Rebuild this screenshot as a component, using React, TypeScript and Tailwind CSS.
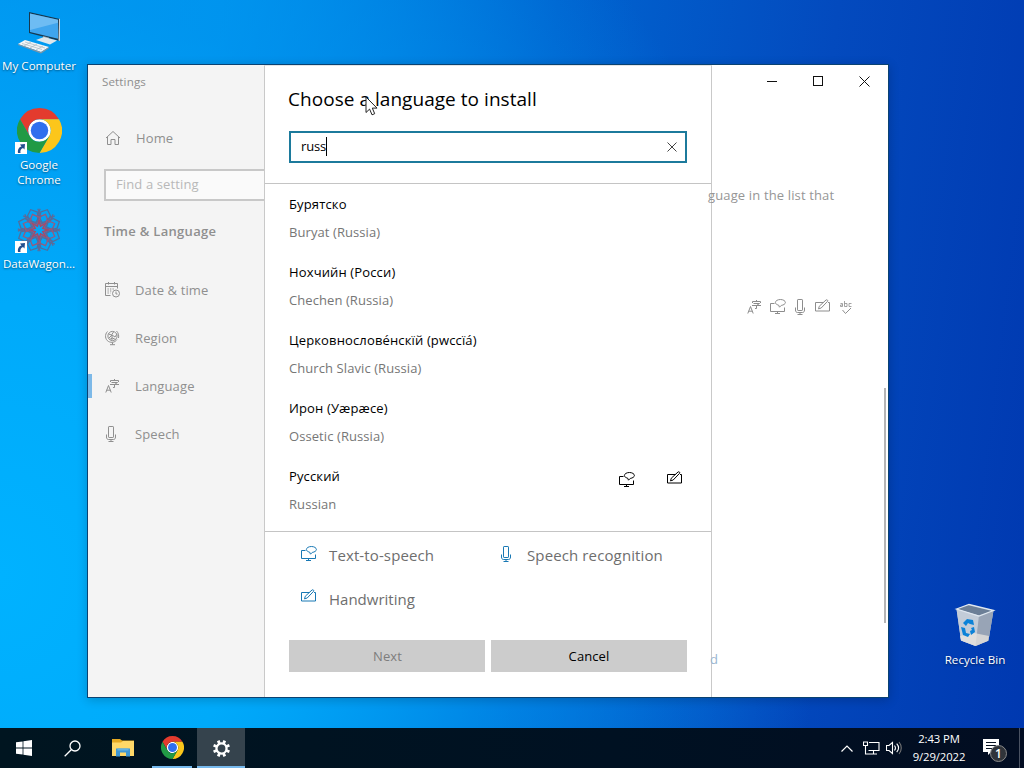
import React from 'react';

type IconProps = { className?: string };

const TtsIcon = ({ className = '' }: IconProps) => (
  <svg viewBox="0 0 16 16" className={`h-4 w-4 shrink-0 ${className}`} fill="none" stroke="currentColor" strokeWidth="1">
    <path d="M4.500 4.500H.5v8h14V8.500M7.500 12.500v2M5 14.500h5" />
    <path d="M8.600 6.100C6.600 5.700 5.400 4.700 5.400 3.500c0-1.600 2.200-3 5-3s5 1.400 5 3c0 1.400-1.800 2.600-4.100 2.900L9.500 8.200z" />
  </svg>
);

const PenIcon = ({ className = '' }: IconProps) => (
  <svg viewBox="0 0 16 16" className={`h-4 w-4 shrink-0 ${className}`} fill="none" stroke="currentColor" strokeWidth="1">
    <path d="M8.500 4.500H.5v8.500h14V4.500h-1.500" />
    <path d="M3.500 10.900l.8-2.700L11 2c1-.8 2.300.4 1.500 1.400L6.200 10z" />
  </svg>
);

const MicIcon = ({ className = '' }: IconProps) => (
  <svg viewBox="0 0 16 18" className={`h-[18px] w-4 shrink-0 ${className}`} fill="none" stroke="currentColor" strokeWidth="1">
    <rect x="5.500" y="1.500" width="5" height="11" rx=".6" />
    <path d="M3.500 9.500v2.500c0 1.500.7 2.500 2 2.500h5c1.300 0 2-1 2-2.500V9.500M8 14.500v2M5.500 16.500h5" />
  </svg>
);

const LanguageIcon = ({ className = '' }: IconProps) => (
  <svg viewBox="0 0 16 16" className={`h-4 w-4 shrink-0 ${className}`} fill="none" stroke="currentColor" strokeWidth="1">
    <path d="M1.800 14.500L4.500 7.500l2.700 7M2.700 12.200h3.700" />
    <path d="M6.500 4V2.500h8V4M10.500 1v1.500M7.500 4.500h6L10.500 6.500V9.500H9M6 6.500h9" />
  </svg>
);

const SpellIcon = ({ className = '' }: IconProps) => (
  <svg viewBox="0 0 16 16" className={`h-4 w-4 shrink-0 ${className}`} fill="none" stroke="currentColor" strokeWidth=".8">
    <path d="M2.500 3.500h2v3h-2V5h2M6.500 1v5.500h2.500v-3H6.500M13.500 3.500H11v3h2.500" />
    <path d="M4.500 10l3 3.500L13 8" strokeWidth="1" />
  </svg>
);

const HomeIcon = () => (
  <svg viewBox="0 0 16 16" className="h-4 w-4" fill="none" stroke="currentColor" strokeWidth="1">
    <path d="M1 8l7-6.500L15 8M2.500 7v7.500h3.500V9.500h4v5h3.500V7" />
  </svg>
);

const CalendarIcon = () => (
  <svg viewBox="0 0 16 16" className="h-4 w-4" fill="none" stroke="currentColor" strokeWidth="1">
    <path d="M6.500 13.500h-5v-12h12v5M1.500 4.500h12M4.500 0v2.500M10.500 0v2.500" />
    <path d="M3.500 7h7M3.500 9h4M3.500 11h3" strokeDasharray="1.300 1.200" />
    <circle cx="12" cy="11.500" r="3.500" />
    <path d="M12 9.500v2.500h1.500" />
  </svg>
);

const GlobeIcon = () => (
  <svg viewBox="0 0 16 16" className="h-4 w-4" fill="none" stroke="currentColor" strokeWidth="1">
    <circle cx="8.500" cy="6" r="4.600" />
    <path d="M4.500 4l3 1 2-3M5 8l3-3 3 2 2-3M5.500 9.500l3-1.500 3 1.500M8 5v5M3.500 1.500c-3 3-2.500 8 1 10 3 1.500 6.500 1 8.500-2M8.500 12.500v2M6 14.700h5" />
    <path d="M12.500 1c2 2 2.500 4.500 2 7" />
  </svg>
);

const ChromeLogo = ({ className = '' }: IconProps) => (
  <svg viewBox="0 0 48 48" className={className}>
    <circle cx="24" cy="24" r="12" fill="#fff" />
    <path fill="#e33b2e" d="M24 12h20.781a23.994 23.994 0 0 0-41.564.003L13.608 30l.009-.002A11.985 11.985 0 0 1 24 12z" />
    <path fill="#fcc61b" d="M34.391 30.003L24.001 48A23.994 23.994 0 0 0 44.780 12.003H23.999l-.003.009a11.985 11.985 0 0 1 10.395 17.991z" />
    <path fill="#219a45" d="M13.609 30.003L3.218 12.006A23.994 23.994 0 0 0 24.003 48l10.390-17.997-.007-.007a11.985 11.985 0 0 1-20.777.007z" />
    <circle cx="24" cy="24" r="9.300" fill="#2f6fee" />
  </svg>
);

const ShortcutBadge = () => (
  <svg viewBox="0 0 12 12" className="absolute bottom-[1px] left-0 h-3 w-3">
    <rect width="12" height="12" fill="#fff" />
    <path d="M3 11C2.500 7.500 4 5 6.500 4.500L5 2.500l5-.5-.5 5.500L8 6C6 6.500 5 8.500 5.500 11z" fill="#24508e" />
  </svg>
);

const ComputerArt = () => (
  <svg viewBox="0 0 48 48" className="h-12 w-12">
    <path d="M14 4l31 7v22L14 25z" fill="#17384f" />
    <path d="M44 10.500l1 .5v22l-1.500-.5z" fill="#c9d3da" />
    <path d="M15 5.500l28 6.300v19L15 24z" fill="#3fa5ee" />
    <path d="M15 5.500l28 6.300v3L15 22z" fill="#8dcbf7" opacity=".6" />
    <path d="M28 28l6 1.500v4l-6-1z" fill="#8998a3" />
    <path d="M21 32l8-3 13 3.500-7 4z" fill="#dfe7ec" />
    <path d="M3 36l7-4 24 7-8 5z" fill="#f2f5f7" />
    <path d="M3 36l23 8 8-5v1.300L26 45.500 3 37z" fill="#7e95a5" />
    <path d="M7 35.500l20 6M10 34l20 6M9 38l7-4M15 40l7-4M21 42l7-4" stroke="#a9b7c0" strokeWidth=".7" fill="none" />
  </svg>
);

const starAngles = [0, 45, 90, 135, 180, 225, 270, 315];

const StarArt = () => (
  <svg viewBox="0 0 48 48" className="h-12 w-12" fill="none" strokeWidth="1.300">
    {starAngles.map((a) => (
      <g key={a} transform={`rotate(${a + 22.5} 24 24)`}>
        <path d="M16 9l8-7 8 7-8 7z" stroke="#4f6f9f" />
        <path d="M17 4v8l7 5 7-5V4" stroke="#5f6a98" />
        <path d="M24 7l-6 6 6 6 6-6z" stroke="#985a7c" />
        <path d="M20 15l4 5 4-5" stroke="#a04c6c" />
      </g>
    ))}
  </svg>
);

const BinArt = () => (
  <svg viewBox="0 0 48 48" className="h-12 w-12">
    <path d="M5.500 7L18 2.500 42.500 8.500l-5 30L24.500 44 10 38.500z" fill="#b9c3d0" />
    <path d="M5.500 7L18 2.500l24.500 6-14 5.500z" fill="#6c7f97" />
    <path d="M5.500 7L28 13.500l-3.500 30.500L10 38.500z" fill="#c3ccd8" />
    <path d="M28 13.500l14.500-5-5 30-13 5.500z" fill="#98a4b6" />
    <path d="M9 34l14-3 15 3-1 5-12.500 5L10 38.500z" fill="#e9e5df" opacity=".75" />
    <path d="M5.500 7L18 2.500l24.500 6L28 14z" fill="none" stroke="#dfe7f0" strokeWidth="1.300" />
    <path d="M12 21l4-4 6 1 1 5-4-1-2-1-2 3zM10 25l4 1 1 5 4 1-2 3-5-2zM23 25l1 5-4 3-1-4 2-1-1-2z" fill="#0b82d8" />
  </svg>
);

const GearIcon = () => (
  <svg viewBox="0 0 20 20" className="h-[19px] w-[19px]" fill="none" stroke="#fff">
    <circle cx="10" cy="10" r="5.300" strokeWidth="2.400" />
    {starAngles.map((a) => (
      <path key={a} d="M10 1v3.500" strokeWidth="3" transform={`rotate(${a + 22.5} 10 10)`} />
    ))}
  </svg>
);

const languages = [
  { native: 'Бурятско', english: 'Buryat (Russia)' },
  { native: 'Нохчийн (Росси)', english: 'Chechen (Russia)' },
  { native: 'Церковнослове\u0301нскїй (рwссїа\u0301)', english: 'Church Slavic (Russia)' },
  { native: 'Ирон (Уæрæсе)', english: 'Ossetic (Russia)' },
  { native: 'Русский', english: 'Russian', features: true },
];

const navItems = [
  { label: 'Date & time', icon: <CalendarIcon /> },
  { label: 'Region', icon: <GlobeIcon /> },
  { label: 'Language', icon: <LanguageIcon />, active: true },
  { label: 'Speech', icon: <MicIcon className="-ml-px" /> },
];

function DesktopIcon({ lines, art, shortcut }: { lines: string[]; art: React.ReactNode; shortcut?: boolean }) {
  return (
    <div className="flex h-[99px] w-[78px] flex-col items-center pt-2">
      <div className="relative flex h-12 w-12 items-center justify-center">
        {art}
        {shortcut && <ShortcutBadge />}
      </div>
      <div className="mt-[2px] text-center text-[11.600px] leading-[15px] whitespace-nowrap text-white [text-shadow:0_1px_2px_rgba(0,0,0,0.5)]">
        {lines.map((l) => (
          <div key={l}>{l}</div>
        ))}
      </div>
    </div>
  );
}

function Sidebar() {
  return (
    <aside className="flex w-[176px] shrink-0 flex-col bg-[#f4f4f4] text-[13px] tracking-[0.12px] text-[#8f8f8f]">
      <div className="mt-2 pl-[14px] text-[11.600px] leading-[18px]">Settings</div>
      <div className="mt-[24px] flex h-12 items-center gap-[15px] pl-[17px]">
        <div className="pb-[2px]">
          <HomeIcon />
        </div>
        <span>Home</span>
      </div>
      <div className="mt-[6px] ml-4 flex h-8 items-center border-2 border-r-0 border-[#c8c8c8] bg-[#fafafa] pl-[10px] text-[#b8b8b8]">
        Find a setting
      </div>
      <div className="mt-[18px] pl-4 leading-6 font-semibold tracking-[0.3px]">Time &amp; Language</div>
      <nav className="mt-[24px]">
        {navItems.map((n) => (
          <div key={n.label} className="flex h-12 items-center">
            <div className={n.active ? 'mb-[3px] h-6 w-1 bg-[#7db9e8]' : 'h-6 w-1'} />
            <div className="ml-3 flex w-[31px] pb-[3px]">{n.icon}</div>
            <span>{n.label}</span>
          </div>
        ))}
      </nav>
    </aside>
  );
}

function InstallDialog() {
  return (
    <section className="flex w-[448px] shrink-0 flex-col border border-b-0 border-[#c9c9c9] border-t-[#e4e4e4] bg-white">
      <header className="border-b border-[#c4c4c4] px-6 pt-[19px] pb-5">
        <h1 className="-ml-px text-[19px] leading-7 tracking-[0.04px] text-black">Choose a language to install</h1>
        <div className="mt-[18px] flex h-8 items-center justify-between border-2 border-[#1c7a9c] pr-2 pl-[10px]">
          <div className="flex items-center">
            <span className="text-[13px] tracking-[-0.15px] text-black">russ</span>
            <span className="mb-[2px] h-[19px] w-px bg-black" />
          </div>
          <svg viewBox="0 0 10 10" className="h-[10px] w-[10px]" stroke="#444" strokeWidth="1">
            <path d="M.5.5l9 9M9.500.5l-9 9" />
          </svg>
        </div>
      </header>
      <ul className="h-[347px] px-6">
        {languages.map((l) => (
          <li key={l.english} className="flex h-[68px] justify-between py-[6px] text-[13px] leading-7">
            <div>
              <div className="tracking-[0.14px] text-black">{l.native}</div>
              <div className="tracking-[0.08px] text-[#767676]">{l.english}</div>
            </div>
            {l.features && (
              <div className="flex gap-8 pt-[10px] pr-1 text-black">
                <TtsIcon />
                <PenIcon className="-mt-[2px]" />
              </div>
            )}
          </li>
        ))}
      </ul>
      <div className="grid grid-cols-[197px_1fr] border-t border-[#c4c4c4] pt-px pl-[36px] text-[15px] tracking-[0.12px] text-[#6e6e6e]">
        <div className="flex h-11 items-center">
          <TtsIcon className="mb-[2px] text-[#1878b4]" />
          <span className="ml-[12px]">Text-to-speech</span>
        </div>
        <div className="flex h-11 items-center">
          <MicIcon className="mb-[2px] text-[#1878b4]" />
          <span className="ml-[13px]">Speech recognition</span>
        </div>
        <div className="flex h-11 items-center">
          <PenIcon className="mb-[6px] text-[#1878b4]" />
          <span className="ml-[12px] tracking-normal">Handwriting</span>
        </div>
      </div>
      <div className="mt-[19px] grid grid-cols-2 gap-[6px] px-6 text-[13px]">
        <button className="h-8 bg-[#cccccc] pt-[2px] pl-px tracking-[0.1px] text-[#7d7d7d]">Next</button>
        <button className="h-8 bg-[#cccccc] pt-[2px] tracking-[0.1px] text-black">Cancel</button>
      </div>
    </section>
  );
}

function SettingsContent() {
  return (
    <main className="relative flex w-[176px] flex-col bg-white">
      <div className="ml-[37px] grid h-8 grid-cols-[46px_46px_46px] place-items-center">
        <svg viewBox="0 0 11 11" className="h-[11px] w-[11px]" stroke="#111" fill="none">
          <path d="M0 5.500h10" />
        </svg>
        <svg viewBox="0 0 11 11" className="h-[11px] w-[11px]" stroke="#111" fill="none">
          <rect x=".5" y=".5" width="9" height="9" />
        </svg>
        <svg viewBox="0 0 11 11" className="h-[11px] w-[11px]" stroke="#111" fill="none">
          <path d="M.5.5l10 10M10.500.5l-10 10" />
        </svg>
      </div>
      <p className="mt-[88px] -ml-1 text-[13px] leading-5 tracking-[0.14px] whitespace-nowrap text-[#969696]">guage in the list that</p>
      <div className="mt-[93px] ml-[34px] flex h-[18px] items-center gap-[7px] text-[#8d8d8d]">
        <LanguageIcon />
        <TtsIcon className="ml-px -mr-px" />
        <MicIcon />
        <PenIcon className="mb-[2px]" />
        <SpellIcon className="mt-px" />
      </div>
      <div className="mt-[333px] -ml-[2px] text-[13px] leading-5 text-[#9ab5d0]">d</div>
      <div className="absolute top-[323px] right-[2px] h-[235px] w-[2px] bg-[#b5b5b5]" />
    </main>
  );
}

function Taskbar() {
  return (
    <footer className="flex h-10 items-stretch justify-between bg-[linear-gradient(90deg,#001520,#001122_60%,#020d22)] text-white">
      <div className="flex">
        <div className="flex w-12 items-center justify-center">
          <svg viewBox="0 0 16 16" className="h-4 w-4" fill="#fff">
            <path d="M0 2.300L6.600 1.400v6.200H0zM7.400 1.300L16 0v7.600H7.400zM0 8.400h6.600v6.200L0 13.700zM7.400 8.400H16V16l-8.600-1.200z" />
          </svg>
        </div>
        <div className="flex w-12 items-center justify-center">
          <svg viewBox="0 0 17 17" className="h-[17px] w-[17px]" fill="none" stroke="#fff" strokeWidth="1.300">
            <circle cx="11" cy="6" r="5" />
            <path d="M7.500 9.500L.7 16.300" />
          </svg>
        </div>
        <div className="ml-[2px] flex w-[49px] items-center justify-center">
          <svg viewBox="0 0 22 18" className="h-[18px] w-[22px]">
            <path d="M0 0h8l2 1.500h12V17H0z" fill="#e5a922" />
            <path d="M0 3.500h9l2-1.500h11v15H0z" fill="#ffd868" />
            <path d="M4 9.500h14V17.500h-4v-4H8v4H4z" fill="#3f97d3" />
            <path d="M5.500 9.500h11v2h-11z" fill="#64b3e2" />
          </svg>
        </div>
        <div className="ml-[5px] flex w-10 flex-col items-center justify-end">
          <ChromeLogo className="mb-[7px] h-[23px] w-[23px]" />
          <div className="h-[2px] w-full bg-[#76b9ed]" />
        </div>
        <div className="ml-[5px] flex w-12 flex-col items-center justify-end bg-[#35434d]">
          <div className="mb-[8px]">
            <GearIcon />
          </div>
          <div className="h-[2px] w-full bg-[#76b9ed]" />
        </div>
      </div>
      <div className="flex items-center">
        <svg viewBox="0 0 12 7" className="h-[7px] w-3" fill="none" stroke="#fff" strokeWidth="1.200">
          <path d="M.5 6.500L6 1l5.500 5.500" />
        </svg>
        <svg viewBox="0 0 17 14" className="ml-[10px] h-[14px] w-[17px]" fill="none" stroke="#fff" strokeWidth="1.100">
          <path d="M6 1.500h10v8H5.500M10.500 9.500v3.500M5 13h9M.5 1h4v3.500h-4zM2.500 4.500V13h3" />
        </svg>
        <svg viewBox="0 0 16 14" className="ml-[6px] h-[14px] w-4" fill="none" stroke="#fff" strokeWidth="1.100">
          <path d="M.5 4.500h2.500L6.500 1.500v11L3 9.500H.5z" />
          <path d="M8.500 4.500c1.200 1.500 1.200 3.500 0 5M10.700 2.700c2.200 2.500 2.200 6 0 8.500" />
          <path d="M13 1c3 3.500 3 8.500 0 12" stroke="#777" />
        </svg>
        <div className="ml-[5px] w-[64px] text-center text-[11.300px] leading-[18px] tracking-[-0.1px] whitespace-nowrap">
          <div>2:43 PM</div>
          <div>9/29/2022</div>
        </div>
        <div className="relative ml-[12px] h-5 w-[24px]">
          <svg viewBox="0 0 24 22" className="h-[22px] w-6">
            <path d="M0 1h16v13H8l-3 3v-3H0z" fill="#fff" />
            <path d="M3 4.500h10M3 7.500h10M3 10.500h6" stroke="#0a1424" strokeWidth="1.200" />
          </svg>
          <span className="absolute top-[7px] left-[7px] flex h-[17px] w-[17px] items-center justify-center rounded-full border border-[#8a8a8a] bg-[#30343a] text-[12px] leading-none font-semibold">
            1
          </span>
        </div>
        <div className="ml-[12px] h-10 w-[5px] border-l border-[#4a5262]" />
      </div>
    </footer>
  );
}

export default function App() {
  return (
    <div className="flex h-[768px] w-[1024px] flex-col overflow-hidden bg-[radial-gradient(ellipse_820px_900px_at_0%_75%,#00b2ff_0%,#00aafa_30%,rgba(0,150,240,0.6)_65%,rgba(0,110,220,0)_100%),linear-gradient(97deg,#009cf2_0%,#0092ec_20%,#0064d0_50%,#034abe_75%,#0038b0_100%)] font-['Open_Sans','Noto_Sans',sans-serif]">
      <div className="flex h-[728px] justify-between">
        <div className="flex w-[87px] flex-col">
          <DesktopIcon lines={['My Computer']} art={<ComputerArt />} />
          <DesktopIcon lines={['Google', 'Chrome']} art={<ChromeLogo className="mb-[2px] h-[45px] w-[45px]" />} shortcut />
          <DesktopIcon lines={['DataWagon...']} art={<StarArt />} shortcut />
        </div>
        <div className="mt-16 flex h-[634px] w-[802px] shrink-0 overflow-hidden border border-[#0a4272] shadow-[0_2px_10px_rgba(0,0,0,0.2)]">
          <Sidebar />
          <InstallDialog />
          <SettingsContent />
        </div>
        <div className="flex w-[135px] items-end justify-center pb-[35px] pl-[37px]">
          <DesktopIcon lines={['Recycle Bin']} art={<BinArt />} />
        </div>
      </div>
      <Taskbar />
      <svg viewBox="0 0 13 20" className="absolute top-[96px] left-[365px] h-5 w-[13px]">
        <path d="M1 1v15.500l3.600-3.400 2.400 5.700 2.700-1.100-2.400-5.600H12z" fill="#fff" stroke="#222" strokeWidth="1" />
      </svg>
    </div>
  );
}
